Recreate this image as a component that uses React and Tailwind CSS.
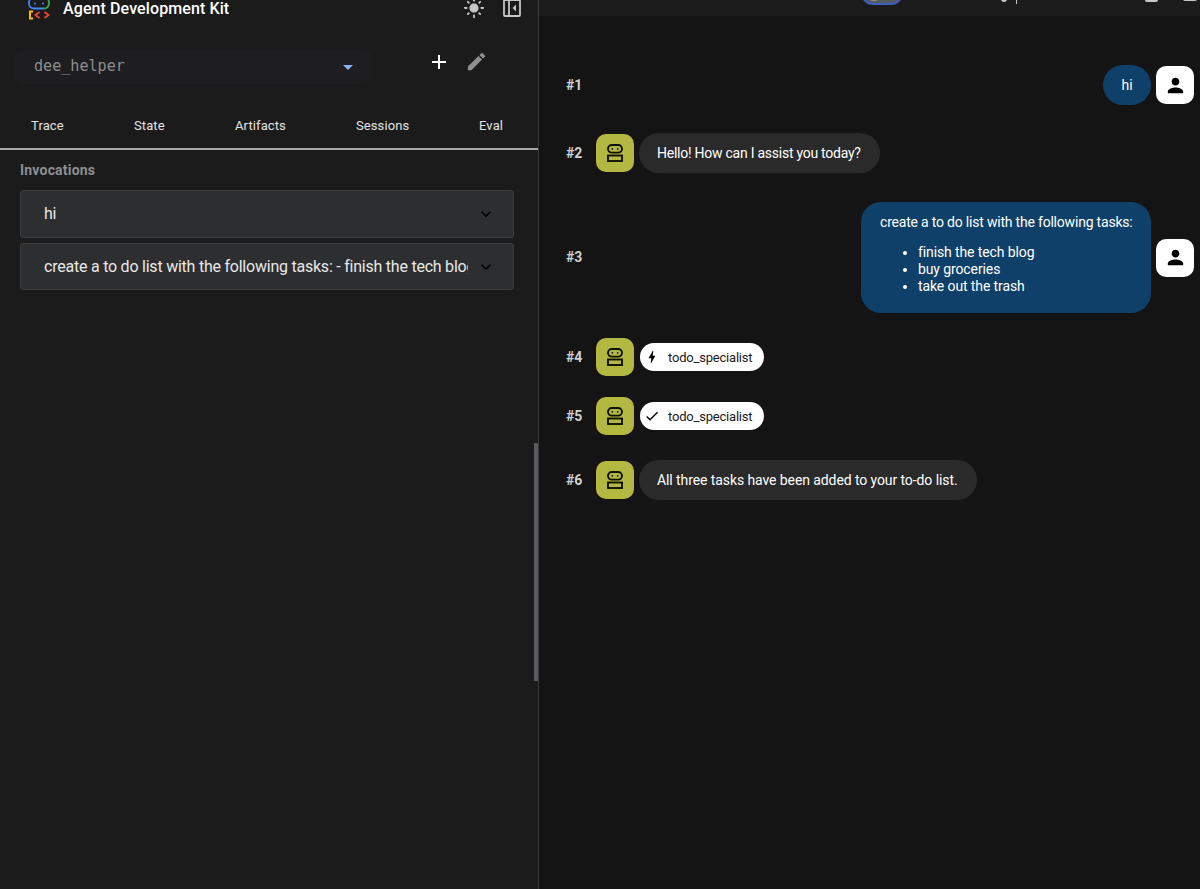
import React from 'react'
import { MdAdd, MdArrowDropDown, MdBolt, MdCheck, MdEdit, MdExpandMore, MdLightMode, MdPerson } from 'react-icons/md';

const tabs = [
  { label: 'Trace', className: 'ml-[31px] w-[103px]' },
  { label: 'State', className: 'w-[101px]' },
  { label: 'Artifacts', className: 'w-[121px]' },
  { label: 'Sessions', className: 'w-[123px]' },
  { label: 'Eval', className: '' },
];

const invocations = [
  'hi',
  'create a to do list with the following tasks: - finish the tech blog',
];

const Logo = () => (
  <svg width="22" height="24" viewBox="0 0 22 24" fill="none" strokeWidth="1.8">
    <path d="M11 1H6.500A5.500 5.500 0 0 0 1 6.500V7.500A5 5 0 0 0 6 12.500H15" stroke="#4285f4" />
    <path d="M11 1H15.500A5.500 5.500 0 0 1 21 6.500V7.500A5 5 0 0 1 16 12.500H15" stroke="#34a853" />
    <circle cx="7" cy="7.500" r="1" fill="#4285f4" />
    <circle cx="15" cy="7.500" r="1" fill="#4285f4" />
    <path d="M5 15.500H2V22.500H5" stroke="#fbbc04" strokeWidth="2" />
    <path d="M11.500 16L7.500 19L11.500 22M16.500 16L20.500 19L16.500 22" stroke="#ea4335" strokeWidth="2" />
  </svg>
)

const PanelIcon = () => (
  <svg width="18" height="18" viewBox="0 0 18 18" fill="none" stroke="#c4c7c5" strokeWidth="1.8">
    <rect x="1" y="1" width="16" height="16" rx="1" />
    <path d="M6 1V17" />
    <path d="M13 5.500V12.500L9.500 9Z" fill="#c4c7c5" stroke="none" />
  </svg>
)

const BotAvatar = () => (
  <div className="flex size-[38px] shrink-0 items-center justify-center rounded-[10px] bg-[#b3b842]">
    <svg width="16" height="18" viewBox="0 0 16 18" fill="none" stroke="#0f1005" strokeWidth="1.9">
      <rect x="1" y="1" width="14" height="7.600" rx="3.800" />
      <rect x="1" y="11.500" width="14" height="5.500" />
      <circle cx="5.300" cy="4.800" r="0.900" fill="#0f1005" stroke="none" />
      <circle cx="10.700" cy="4.800" r="0.900" fill="#0f1005" stroke="none" />
    </svg>
  </div>
)

const UserAvatar = () => (
  <div className="flex size-[38px] shrink-0 items-center justify-center rounded-[10px] bg-white">
    <MdPerson className="size-[23px] text-black" />
  </div>
)

const Row = ({ number, className, children }) => (
  <div className={`flex items-center gap-[5px] pr-[6px] pl-[27px] ${className}`}>
    <span className="w-[25px] shrink-0 text-[14px] font-bold text-[#d0d0d0]">#{number}</span>
    {children}
  </div>
)

const BotMessage = ({ children, className }) => (
  <div className={`flex h-10 items-center rounded-[20px] bg-[#2a2a2a] px-[18px] text-[14px] whitespace-nowrap ${className}`}>
    {children}
  </div>
)

const ToolChip = ({ icon, name }) => (
  <div className="ml-px flex h-[28px] w-[124px] items-center rounded-full bg-white pl-[4px] text-[13px] text-[#1b1b1b]">
    <span className="mr-[8px] flex w-4 justify-center text-black">{icon}</span>
    <span className="pt-px tracking-[-0.2px]">{name}</span>
  </div>
)

const SidePanel = () => (
  <aside className="relative flex w-[539px] shrink-0 flex-col border-r border-[#3a3a3b] bg-[#1b1b1b]">
    <header className="-mt-2 flex h-8 items-center pl-[28px]">
      <Logo />
      <h1 className="ml-[13px] w-[400px] pt-px text-[16px] font-medium tracking-[0.1px] whitespace-nowrap text-white">Agent Development Kit</h1>
      <div className="flex shrink-0 items-center gap-[18px]">
        <MdLightMode className="size-[22px] text-[#c4c7c5]" />
        <PanelIcon />
      </div>
    </header>

    <div className="mt-[27px] flex h-[33px] items-center pl-[15px]">
      <div className="flex h-full w-[357px] items-center justify-between rounded-[8px] bg-[#1e1e20] pr-[12px] pl-[19px] font-['DejaVu_Sans_Mono',monospace] text-[15.1px] text-[#8e8e90]">
        <span className="-mt-[2px]">dee_helper</span>
        <MdArrowDropDown className="-mt-[2px] size-6 text-[#8ab4f8]" />
      </div>
      <MdAdd className="-mt-[11px] ml-[55px] size-6 text-white" />
      <MdEdit className="-mt-[12px] ml-[14px] size-[23px] text-[#8f8f8f]" />
    </div>

    <nav className="flex h-[66px] items-center border-b-2 border-[#a9a9a9] pt-[20px] text-[13px] tracking-[0.1px] text-[#e3e3e3]">
      {tabs.map((tab) => (
        <span key={tab.label} className={tab.className}>{tab.label}</span>
      ))}
    </nav>

    <section className="pt-[10px] pr-[24px] pl-[20px]">
      <h2 className="h-[30px] text-[14px] leading-5 font-bold tracking-[0.2px] text-[#8e8e91]">Invocations</h2>
      <div className="flex flex-col gap-[5px]">
        {invocations.map((text) => (
          <div key={text} className="flex h-[47.7px] items-center rounded-[3px] border border-[#3b3c3e] bg-[#2d2e30] pr-[17px] pl-[23px]">
            <span className="w-[424px] overflow-hidden text-[16px] tracking-[-0.23px] whitespace-nowrap text-[#e8e8e8]">{text}</span>
            <MdExpandMore className="ml-auto size-5 text-black" />
          </div>
        ))}
      </div>
    </section>

    <div className="absolute top-[443px] right-0 h-[238px] w-1 bg-[#5a5b5e]" />
  </aside>
)

const Toolbar = () => (
  <div className="-mt-8 flex h-12 shrink-0 items-end bg-[#1b1b1b] pb-[11px] pl-[322px]">
    <div className="flex h-6 w-[42px] items-center rounded-full border-2 border-[#3f5fbf] bg-[#55585f] pl-[3px]">
      <div className="size-4 rounded-full bg-[#8e918f]" />
    </div>
    <div className="mb-[3px] ml-[98px] size-[6px] rounded-full bg-[#c4c7c5]" />
    <div className="mb-px ml-[9px] h-5 w-px bg-[#c4c7c5]" />
    <div className="mb-[3px] ml-[128px] h-4 w-[13px] rounded-[2px] bg-[#c4c7c5]" />
    <div className="mb-[4px] ml-[25px] h-4 w-[14px] rounded-[2px] bg-[#c4c7c5]" />
  </div>
)

const App = () => {
  return (
    <div className="flex h-[889px] w-[1200px] overflow-hidden bg-[#141414] font-[Roboto,'Open_Sans',sans-serif] text-white">
      <SidePanel />
      <main className="flex min-w-0 flex-1 flex-col">
        <Toolbar />
        <Row number={1} className="mt-[49px] h-10">
          <div className="ml-auto flex h-10 w-12 items-center justify-center rounded-[20px] bg-[#0f4069] text-[14px]">hi</div>
          <UserAvatar />
        </Row>
        <Row number={2} className="mt-[28px] h-10">
          <BotAvatar />
          <BotMessage className="w-[241px] tracking-[-0.25px]">Hello! How can I assist you today?</BotMessage>
        </Row>
        <Row number={3} className="mt-[29px] h-[111px]">
          <div className="ml-auto h-full w-[290px] rounded-[20px] bg-[#0f4069] px-[19px] pt-[12px] text-[14px] leading-[17px] whitespace-nowrap">
            <p className="tracking-[-0.2px]">create a to do list with the following tasks:</p>
            <ul className="mt-[13px] list-disc pl-[38px] tracking-[-0.11px]">
              <li>finish the tech blog</li>
              <li>buy groceries</li>
              <li>take out the trash</li>
            </ul>
          </div>
          <UserAvatar />
        </Row>
        <Row number={4} className="mt-[25px] h-[38px]">
          <BotAvatar />
          <ToolChip icon={<MdBolt className="size-4 shrink-0" />} name="todo_specialist" />
        </Row>
        <Row number={5} className="mt-[21px] h-[38px]">
          <BotAvatar />
          <ToolChip icon={<MdCheck className="size-4 shrink-0" />} name="todo_specialist" />
        </Row>
        <Row number={6} className="mt-[25px] h-10">
          <BotAvatar />
          <BotMessage className="w-[338px] tracking-[-0.09px]">All three tasks have been added to your to-do list.</BotMessage>
        </Row>
      </main>
    </div>
  )
}

export default App
